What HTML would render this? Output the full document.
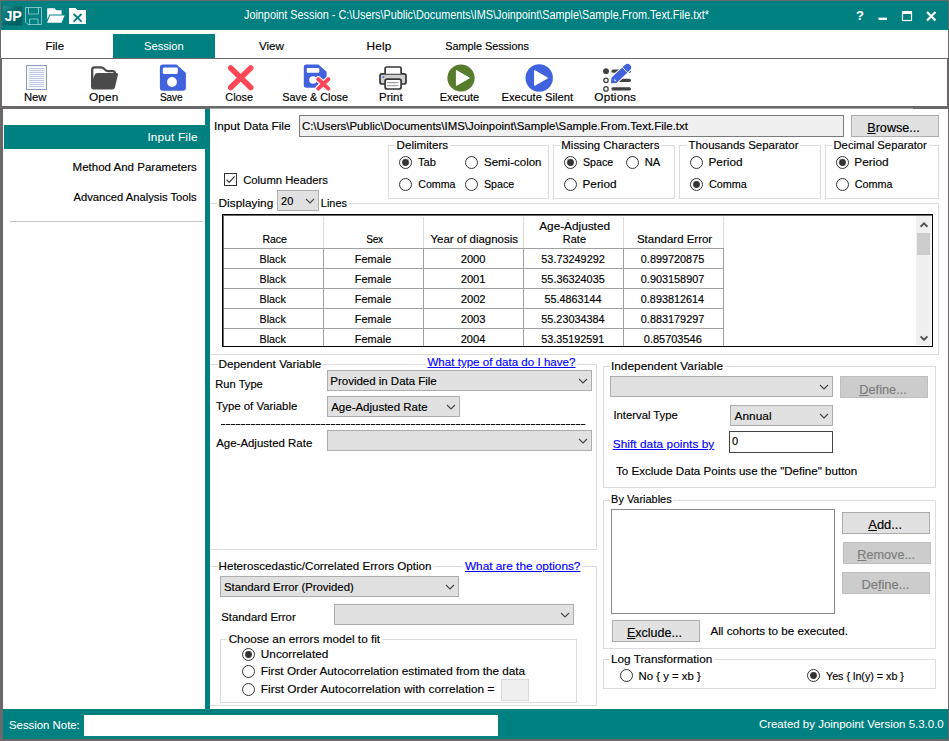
<!DOCTYPE html>
<html><head><meta charset="utf-8"><title>Joinpoint Session</title>
<style>
html,body{margin:0;padding:0;}
body{width:949px;height:741px;overflow:hidden;background:#6a6868;position:relative;font-family:"Liberation Sans",sans-serif;}
.a{position:absolute;display:block;}
.t{position:absolute;white-space:pre;color:#000;-webkit-text-stroke:0.16px currentColor;}
u{text-underline-offset:1px;}
</style></head><body>
<div class="a" style="left:1px;top:1px;width:947px;height:29px;background:#008080;"></div>
<div class="a" style="left:1px;top:30px;width:947px;height:28px;background:#fff;"></div>
<div class="a" style="left:113px;top:34px;width:102px;height:24px;background:#008080;"></div>
<div class="a" style="left:2px;top:59px;width:945px;height:47px;background:#fff;"></div>
<div class="a" style="left:3px;top:109px;width:202px;height:600px;background:#fff;"></div>
<div class="a" style="left:205px;top:109px;width:5px;height:600px;background:#008080;"></div>
<div class="a" style="left:210px;top:109px;width:738px;height:600px;background:#fff;"></div>
<div class="a" style="left:210px;top:108px;width:703px;height:1px;background:#a4a2a2;"></div>
<div class="a" style="left:3px;top:709px;width:945px;height:30px;background:#008080;"></div>
<div class="a" style="left:4px;top:125px;width:201px;height:24px;background:#008080;"></div>
<div class="a" style="left:10px;top:221px;width:193px;height:1px;background:#c4c4c4;"></div>
<div class="a" style="left:299px;top:115px;width:545px;height:22px;background:#f0f0f0;border:1px solid #7a7a7a;box-sizing:border-box;"></div>
<div class="a" style="left:851px;top:115px;width:88px;height:22px;background:#e1e1e1;border:1px solid #adadad;box-sizing:border-box;"></div>
<div class="a" style="left:210px;top:203px;width:729px;height:152px;border:1px solid #dcdcdc;box-sizing:border-box;border-left:none;"></div>
<div class="a" style="left:217px;top:196px;width:132px;height:14px;background:#fff;"></div>
<div class="a" style="left:277px;top:190px;width:42px;height:21px;background:#e1e1e1;border:1px solid #adadad;box-sizing:border-box;"></div>
<svg class="a" style="left:303.7px;top:197.0px" width="12" height="8" viewBox="0 0 12 8"><path d="M2 2 L6 6 L10 2" fill="none" stroke="#444" stroke-width="1.1"/></svg>
<div class="a" style="left:388px;top:145px;width:161px;height:54px;border:1px solid #dcdcdc;box-sizing:border-box;"></div>
<div class="a" style="left:395.5px;top:139px;width:54.25px;height:12px;background:#fff;"></div>
<svg class="a" style="left:399px;top:155.5px" width="13" height="13" viewBox="0 0 13 13"><circle cx="6.5" cy="6.5" r="6" fill="#fff" stroke="#333" stroke-width="1"/><circle cx="6.5" cy="6.5" r="3.4" fill="#333"/></svg>
<svg class="a" style="left:399px;top:177.5px" width="13" height="13" viewBox="0 0 13 13"><circle cx="6.5" cy="6.5" r="6" fill="#fff" stroke="#333" stroke-width="1"/></svg>
<svg class="a" style="left:465px;top:155.5px" width="13" height="13" viewBox="0 0 13 13"><circle cx="6.5" cy="6.5" r="6" fill="#fff" stroke="#333" stroke-width="1"/></svg>
<svg class="a" style="left:465px;top:177.5px" width="13" height="13" viewBox="0 0 13 13"><circle cx="6.5" cy="6.5" r="6" fill="#fff" stroke="#333" stroke-width="1"/></svg>
<div class="a" style="left:553px;top:145px;width:122px;height:54px;border:1px solid #dcdcdc;box-sizing:border-box;"></div>
<div class="a" style="left:560.25px;top:139px;width:100.75px;height:12px;background:#fff;"></div>
<svg class="a" style="left:564.25px;top:155.5px" width="13" height="13" viewBox="0 0 13 13"><circle cx="6.5" cy="6.5" r="6" fill="#fff" stroke="#333" stroke-width="1"/><circle cx="6.5" cy="6.5" r="3.4" fill="#333"/></svg>
<svg class="a" style="left:564.25px;top:177.5px" width="13" height="13" viewBox="0 0 13 13"><circle cx="6.5" cy="6.5" r="6" fill="#fff" stroke="#333" stroke-width="1"/></svg>
<svg class="a" style="left:626px;top:155.5px" width="13" height="13" viewBox="0 0 13 13"><circle cx="6.5" cy="6.5" r="6" fill="#fff" stroke="#333" stroke-width="1"/></svg>
<div class="a" style="left:679px;top:145px;width:142px;height:54px;border:1px solid #dcdcdc;box-sizing:border-box;"></div>
<div class="a" style="left:686.75px;top:139px;width:113.5px;height:12px;background:#fff;"></div>
<svg class="a" style="left:690px;top:155.5px" width="13" height="13" viewBox="0 0 13 13"><circle cx="6.5" cy="6.5" r="6" fill="#fff" stroke="#333" stroke-width="1"/></svg>
<svg class="a" style="left:690px;top:177.5px" width="13" height="13" viewBox="0 0 13 13"><circle cx="6.5" cy="6.5" r="6" fill="#fff" stroke="#333" stroke-width="1"/><circle cx="6.5" cy="6.5" r="3.4" fill="#333"/></svg>
<div class="a" style="left:825px;top:145px;width:114px;height:54px;border:1px solid #dcdcdc;box-sizing:border-box;"></div>
<div class="a" style="left:832.4px;top:139px;width:96.30000000000007px;height:12px;background:#fff;"></div>
<svg class="a" style="left:835.6px;top:155.5px" width="13" height="13" viewBox="0 0 13 13"><circle cx="6.5" cy="6.5" r="6" fill="#fff" stroke="#333" stroke-width="1"/><circle cx="6.5" cy="6.5" r="3.4" fill="#333"/></svg>
<svg class="a" style="left:835.6px;top:177.5px" width="13" height="13" viewBox="0 0 13 13"><circle cx="6.5" cy="6.5" r="6" fill="#fff" stroke="#333" stroke-width="1"/></svg>
<svg class="a" style="left:224px;top:173px" width="13" height="13" viewBox="0 0 13 13"><rect x="0.5" y="0.5" width="12" height="12" fill="#fff" stroke="#333"/><path d="M2.6 6.6 L5.2 9.3 L10.6 3.4" fill="none" stroke="#333" stroke-width="1.2"/></svg>
<div class="a" style="left:222px;top:214px;width:711px;height:133px;background:#fff;"></div>
<div class="a" style="left:222px;top:214px;width:711px;height:133px;box-sizing:border-box;border:1px solid #000"></div>
<div class="a" style="left:223px;top:215px;width:709px;height:1px;background:#6c6c6c;"></div>
<div class="a" style="left:223px;top:215px;width:1px;height:131px;background:#6c6c6c;"></div>
<div class="a" style="left:323px;top:217px;width:1px;height:31px;background:#dedede;"></div>
<div class="a" style="left:323px;top:248px;width:1px;height:98px;background:#a0a0a0;"></div>
<div class="a" style="left:423px;top:217px;width:1px;height:31px;background:#dedede;"></div>
<div class="a" style="left:423px;top:248px;width:1px;height:98px;background:#a0a0a0;"></div>
<div class="a" style="left:523px;top:217px;width:1px;height:31px;background:#dedede;"></div>
<div class="a" style="left:523px;top:248px;width:1px;height:98px;background:#a0a0a0;"></div>
<div class="a" style="left:623px;top:217px;width:1px;height:31px;background:#dedede;"></div>
<div class="a" style="left:623px;top:248px;width:1px;height:98px;background:#a0a0a0;"></div>
<div class="a" style="left:723px;top:217px;width:1px;height:31px;background:#dedede;"></div>
<div class="a" style="left:723px;top:248px;width:1px;height:98px;background:#a0a0a0;"></div>
<div class="a" style="left:224px;top:248px;width:500px;height:1px;background:#a0a0a0;"></div>
<div class="a" style="left:224px;top:268px;width:500px;height:1px;background:#a0a0a0;"></div>
<div class="a" style="left:224px;top:288px;width:500px;height:1px;background:#a0a0a0;"></div>
<div class="a" style="left:224px;top:308px;width:500px;height:1px;background:#a0a0a0;"></div>
<div class="a" style="left:224px;top:328px;width:500px;height:1px;background:#a0a0a0;"></div>
<div class="a" style="left:916px;top:216px;width:15px;height:129px;background:#f0f0f0;"></div>
<div class="a" style="left:917px;top:232.5px;width:13px;height:22.5px;background:#cdcdcd;"></div>
<svg class="a" style="left:918.5px;top:220.6px" width="10" height="8" viewBox="0 0 10 8"><path d="M1.6 5.8 L5 2.4 L8.4 5.8" fill="none" stroke="#555" stroke-width="2"/></svg>
<svg class="a" style="left:918.5px;top:333.6px" width="10" height="8" viewBox="0 0 10 8"><path d="M1.6 2.4 L5 5.8 L8.4 2.4" fill="none" stroke="#555" stroke-width="2"/></svg>
<div class="a" style="left:210px;top:364px;width:387px;height:186px;border:1px solid #dcdcdc;box-sizing:border-box;border-left:none;"></div>
<div class="a" style="left:217.5px;top:358px;width:105.25px;height:12px;background:#fff;"></div>
<div class="a" style="left:425.5px;top:358px;width:151.5px;height:12px;background:#fff;"></div>
<div class="a" style="left:327px;top:370px;width:265px;height:21px;background:#e1e1e1;border:1px solid #adadad;box-sizing:border-box;"></div>
<svg class="a" style="left:576.7px;top:377.0px" width="12" height="8" viewBox="0 0 12 8"><path d="M2 2 L6 6 L10 2" fill="none" stroke="#444" stroke-width="1.1"/></svg>
<div class="a" style="left:327px;top:396px;width:133px;height:21px;background:#e1e1e1;border:1px solid #adadad;box-sizing:border-box;"></div>
<svg class="a" style="left:444.7px;top:403.0px" width="12" height="8" viewBox="0 0 12 8"><path d="M2 2 L6 6 L10 2" fill="none" stroke="#444" stroke-width="1.1"/></svg>
<div class="a" style="left:221px;top:424px;width:364.5px;height:1px;background:repeating-linear-gradient(90deg,#111 0,#111 4px,#9aa 4px,#9aa 5px)"></div>
<div class="a" style="left:327px;top:430px;width:265px;height:21px;background:#e1e1e1;border:1px solid #adadad;box-sizing:border-box;"></div>
<svg class="a" style="left:576.7px;top:437.0px" width="12" height="8" viewBox="0 0 12 8"><path d="M2 2 L6 6 L10 2" fill="none" stroke="#444" stroke-width="1.1"/></svg>
<div class="a" style="left:210px;top:566px;width:387px;height:140px;border:1px solid #dcdcdc;box-sizing:border-box;border-left:none;"></div>
<div class="a" style="left:217.5px;top:560px;width:215.25px;height:12px;background:#fff;"></div>
<div class="a" style="left:463px;top:560px;width:119px;height:12px;background:#fff;"></div>
<div class="a" style="left:220px;top:576px;width:239px;height:21px;background:#e1e1e1;border:1px solid #adadad;box-sizing:border-box;"></div>
<svg class="a" style="left:443.7px;top:583.0px" width="12" height="8" viewBox="0 0 12 8"><path d="M2 2 L6 6 L10 2" fill="none" stroke="#444" stroke-width="1.1"/></svg>
<div class="a" style="left:334px;top:604px;width:240px;height:21px;background:#e1e1e1;border:1px solid #adadad;box-sizing:border-box;"></div>
<svg class="a" style="left:558.7px;top:611.0px" width="12" height="8" viewBox="0 0 12 8"><path d="M2 2 L6 6 L10 2" fill="none" stroke="#444" stroke-width="1.1"/></svg>
<div class="a" style="left:220px;top:639px;width:357px;height:64px;border:1px solid #dcdcdc;box-sizing:border-box;"></div>
<div class="a" style="left:227.25px;top:633px;width:154.75px;height:12px;background:#fff;"></div>
<svg class="a" style="left:242px;top:648px" width="13" height="13" viewBox="0 0 13 13"><circle cx="6.5" cy="6.5" r="6" fill="#fff" stroke="#333" stroke-width="1"/><circle cx="6.5" cy="6.5" r="3.4" fill="#333"/></svg>
<svg class="a" style="left:242px;top:664.5px" width="13" height="13" viewBox="0 0 13 13"><circle cx="6.5" cy="6.5" r="6" fill="#fff" stroke="#333" stroke-width="1"/></svg>
<svg class="a" style="left:242px;top:682.5px" width="13" height="13" viewBox="0 0 13 13"><circle cx="6.5" cy="6.5" r="6" fill="#fff" stroke="#333" stroke-width="1"/></svg>
<div class="a" style="left:501px;top:679px;width:28px;height:22px;background:#f0f0f0;border:1px solid #d9d9d9;box-sizing:border-box;"></div>
<div class="a" style="left:603px;top:366px;width:333px;height:122px;border:1px solid #dcdcdc;box-sizing:border-box;"></div>
<div class="a" style="left:610px;top:360px;width:114.5px;height:12px;background:#fff;"></div>
<div class="a" style="left:610px;top:376px;width:223px;height:21px;background:#e1e1e1;border:1px solid #adadad;box-sizing:border-box;"></div>
<svg class="a" style="left:817.7px;top:383.0px" width="12" height="8" viewBox="0 0 12 8"><path d="M2 2 L6 6 L10 2" fill="none" stroke="#444" stroke-width="1.1"/></svg>
<div class="a" style="left:840px;top:376px;width:88px;height:22px;background:#cccccc;border:1px solid #bfbfbf;box-sizing:border-box;"></div>
<div class="a" style="left:730px;top:405px;width:103px;height:21px;background:#e1e1e1;border:1px solid #adadad;box-sizing:border-box;"></div>
<svg class="a" style="left:817.7px;top:412.0px" width="12" height="8" viewBox="0 0 12 8"><path d="M2 2 L6 6 L10 2" fill="none" stroke="#444" stroke-width="1.1"/></svg>
<div class="a" style="left:729px;top:431px;width:104px;height:22px;background:#fff;border:1px solid #444;box-sizing:border-box;"></div>
<div class="a" style="left:603px;top:500px;width:333px;height:149px;border:1px solid #dcdcdc;box-sizing:border-box;"></div>
<div class="a" style="left:610px;top:494px;width:63.25px;height:12px;background:#fff;"></div>
<div class="a" style="left:611px;top:509px;width:224px;height:105px;background:#fff;border:1px solid #828790;box-sizing:border-box;"></div>
<div class="a" style="left:842px;top:512px;width:88px;height:22px;background:#e1e1e1;border:1px solid #adadad;box-sizing:border-box;"></div>
<div class="a" style="left:843px;top:542px;width:88px;height:22px;background:#cccccc;border:1px solid #bfbfbf;box-sizing:border-box;"></div>
<div class="a" style="left:842px;top:572px;width:88px;height:22px;background:#cccccc;border:1px solid #bfbfbf;box-sizing:border-box;"></div>
<div class="a" style="left:612px;top:620px;width:88px;height:22px;background:#e1e1e1;border:1px solid #adadad;box-sizing:border-box;"></div>
<div class="a" style="left:603px;top:659px;width:333px;height:30px;border:1px solid #dcdcdc;box-sizing:border-box;"></div>
<div class="a" style="left:610px;top:653px;width:103.75px;height:12px;background:#fff;"></div>
<svg class="a" style="left:620px;top:669.25px" width="13" height="13" viewBox="0 0 13 13"><circle cx="6.5" cy="6.5" r="6" fill="#fff" stroke="#333" stroke-width="1"/></svg>
<svg class="a" style="left:807px;top:669.25px" width="13" height="13" viewBox="0 0 13 13"><circle cx="6.5" cy="6.5" r="6" fill="#fff" stroke="#333" stroke-width="1"/><circle cx="6.5" cy="6.5" r="3.4" fill="#333"/></svg>
<div class="a" style="left:84px;top:715px;width:413.5px;height:20.5px;background:#fff;"></div>
<svg class="a" style="left:850px;top:5px" width="95" height="22" viewBox="850 5 95 22"><g fill="none" stroke="#fff"><path d="M878.5 18.8 H887" stroke-width="2.4"/><rect x="902.5" y="12.5" width="9" height="8" stroke-width="1.2"/><path d="M902 12.5 H912" stroke-width="3"/><path d="M927 12 L935.5 20.5 M935.5 12 L927 20.5" stroke-width="2.2"/></g></svg>
<svg class="a" style="left:0;top:0" width="949" height="110" viewBox="0 0 949 110"><defs><linearGradient id="jp" x1="0" y1="0" x2="1" y2="1"><stop offset="0" stop-color="#2a8f8f"/><stop offset="0.45" stop-color="#006a6a"/><stop offset="1" stop-color="#005c5c"/></linearGradient></defs><rect x="3" y="6" width="19.5" height="19.5" fill="url(#jp)"/><g fill="none" stroke="#fff" stroke-opacity="0.5" stroke-width="1"><path d="M25.5 7.5 H41.5 V24.5 H28 L25.5 22 Z"/><path d="M28.5 7.5 V14 H38.5 V7.5"/><path d="M29.5 24.5 V19 H38 V24.5"/></g><g fill="#fff"><path d="M47.2 8.2 H54.6 L56.4 10.2 H61.6 V14.5 H49.4 L47.2 19.8 Z"/><path d="M50 15.4 H64.6 L61.5 22.7 H47 Z"/></g><path d="M69 8 H75.6 L77.4 10 H86 V24 H69 Z" fill="#fff"/><path d="M73.6 14 L81.6 21.6 M81.6 14 L73.6 21.6" stroke="#008080" stroke-width="1.8" fill="none"/><rect x="26.5" y="65.5" width="20" height="24" fill="#f6f8fd" stroke="#8a9bc2" stroke-width="1"/><g stroke="#c2cce3" stroke-width="1"><path d="M29 68.5 H44"/><path d="M29 70.5 H44"/><path d="M29 72.5 H44"/><path d="M29 74.5 H44"/><path d="M29 76.5 H44"/><path d="M29 78.5 H44"/><path d="M29 80.5 H44"/><path d="M29 82.5 H44"/><path d="M29 84.5 H44"/><path d="M29 86.5 H44"/></g><path d="M92.2 87 V69.7 a2.4 2.4 0 0 1 2.4 -2.4 h6.4 c1.7 0 2.5 0.9 3.5 1.9 s1.9 1.9 3.6 1.9 h4.5 a2.4 2.4 0 0 1 2.4 2.4 V74" fill="none" stroke="#4a4a4a" stroke-width="2.3"/><path d="M97.3 73.1 H116.3 a1.6 1.6 0 0 1 1.55 2.1 L114.9 87.6 a2.8 2.8 0 0 1 -2.7 2 H93.5 a2.4 2.4 0 0 1 -2.4 -2.4 V83.5 L94.6 75.1 a2.8 2.8 0 0 1 2.7 -2 Z" fill="#4a4a4a"/><path d="M162.9 64.6 H176.54000000000002 L185.9 73.024 V87.7 a3 3 0 0 1 -3 3 H162.9 a3 3 0 0 1 -3 -3 V67.6 a3 3 0 0 1 3 -3 Z" fill="#4062dd"/><rect x="162.8" y="67.5" width="15" height="6.4" rx="1.3" fill="#fff"/><circle cx="172" cy="82" r="4.9" fill="#fff"/><path d="M230.7 68 L250.7 87.6 M250.7 68 L230.7 87.6" stroke="#ff4757" stroke-width="5.6" stroke-linecap="round" fill="none"/><path d="M306.40000000000003 64.4 H318.392 L326.6 71.78720000000001 V85.10000000000001 a2.6 2.6 0 0 1 -2.6 2.6 H306.40000000000003 a2.6 2.6 0 0 1 -2.6 -2.6 V67.0 a2.6 2.6 0 0 1 2.6 -2.6 Z" fill="#4062dd"/><rect x="306.7" y="68.1" width="12.6" height="4.6" rx="1" fill="#fff"/><circle cx="313" cy="80" r="3.8" fill="#fff"/><path d="M318.3 79.2 L328.3 88.6 M328.3 79.2 L318.3 88.6" stroke="#fff" stroke-width="6.2" stroke-linecap="round" fill="none"/><path d="M318.3 79.2 L328.3 88.6 M328.3 79.2 L318.3 88.6" stroke="#ff4757" stroke-width="4" stroke-linecap="round" fill="none"/><g stroke="#363636" stroke-width="1.7" stroke-linejoin="round"><rect x="380" y="73.8" width="26" height="10.2" rx="2" fill="#cfcfcf"/><path d="M385.1 73.8 V68.5 a1.5 1.5 0 0 1 1.5 -1.5 h13 a1.5 1.5 0 0 1 1.5 1.5 V73.8" fill="#fff"/><rect x="385.1" y="79.1" width="16" height="9.9" rx="2" fill="#fff"/></g><path d="M387.2 82.7 H398.4 M387.2 85.7 H398.4" stroke="#8c8c8c" stroke-width="1"/><circle cx="383.4" cy="77.1" r="1" fill="#3f66e8"/><circle cx="461" cy="78" r="13.6" fill="#567c2c"/><path d="M456.4 70.6 L469.4 78 L456.4 85.4 Z" fill="#fff" stroke="#fff" stroke-width="1" stroke-linejoin="round"/><circle cx="539.2" cy="78" r="13.7" fill="#4062dd"/><path d="M534.6 70.6 L547.6 78 L534.6 85.4 Z" fill="#fff" stroke="#fff" stroke-width="1" stroke-linejoin="round"/><g stroke="#424242" stroke-width="3.3" stroke-linecap="round"><path d="M613 71.2 H629.4 M613 80.3 H629.4 M613 88.9 H629.4"/></g><circle cx="606" cy="71.2" r="2.9" fill="#424242"/><circle cx="606" cy="80.3" r="2.2" fill="#fff" stroke="#424242" stroke-width="1.3"/><circle cx="606" cy="88.9" r="2.2" fill="#fff" stroke="#424242" stroke-width="1.3"/><path d="M611 83.3 L611.4 77.8 L624.95 64.95 A3.6 3.6 0 0 1 630.05 70.05 L616.5 82.9 Z" fill="#fff" stroke="#fff" stroke-width="2" stroke-linejoin="round"/><path d="M611 83.3 L611.4 77.8 L624.95 64.95 A3.6 3.6 0 0 1 630.05 70.05 L616.5 82.9 Z" fill="#4062dd"/><path d="M622.3 67.3 L627.7 72.5" stroke="#fff" stroke-width="0.9"/><path d="M614.2 78.6 L614.2 81.2 L616.4 81 Z" fill="#fff" fill-opacity="0.8"/></svg>
<span class="t" style="left:243.56px;top:8px;font-size:12px;line-height:14px;color:#fff;-webkit-text-stroke:0;transform:scaleX(0.9017);transform-origin:0.19px 0;">Joinpoint Session - C:\Users\Public\Documents\IMS\Joinpoint\Sample\Sample.From.Text.File.txt*</span>
<span class="t" style="left:45.56px;top:40px;font-size:11.45px;line-height:12px;letter-spacing:0.006px;">File</span>
<span class="t" style="left:143.99px;top:40px;font-size:11.17px;line-height:12px;letter-spacing:0.007px;color:#fff;-webkit-text-stroke:0.06px #fff;">Session</span>
<span class="t" style="left:258.95px;top:39px;font-size:11.64px;line-height:13px;letter-spacing:0.012px;">View</span>
<span class="t" style="left:366.53px;top:39px;font-size:11.8px;line-height:14px;letter-spacing:0.151px;">Help</span>
<span class="t" style="left:445.26px;top:40px;font-size:10.82px;line-height:12px;letter-spacing:0.007px;">Sample Sessions</span>
<span class="t" style="left:23.98px;top:91px;font-size:11.24px;line-height:12px;letter-spacing:0.010px;">New</span>
<span class="t" style="left:88.94px;top:90px;font-size:11.8px;line-height:14px;letter-spacing:0.156px;">Open</span>
<span class="t" style="left:159.95px;top:92px;font-size:10.0px;line-height:11px;letter-spacing:-0.032px;">Save</span>
<span class="t" style="left:225.35px;top:91px;font-size:10.85px;line-height:12px;letter-spacing:0.002px;">Close</span>
<span class="t" style="left:282.21px;top:91px;font-size:10.86px;line-height:12px;letter-spacing:-0.002px;">Save &amp; Close</span>
<span class="t" style="left:379.06px;top:91px;font-size:11.49px;line-height:12px;letter-spacing:0.003px;">Print</span>
<span class="t" style="left:439.70px;top:91px;font-size:10.93px;line-height:12px;letter-spacing:0.003px;">Execute</span>
<span class="t" style="left:501.48px;top:91px;font-size:11.2px;line-height:12px;letter-spacing:0.006px;">Execute Silent</span>
<span class="t" style="left:594.34px;top:90px;font-size:11.8px;line-height:14px;letter-spacing:0.172px;">Options</span>
<span class="t" style="left:147.41px;top:130px;font-size:11.8px;line-height:14px;letter-spacing:0.177px;color:#fff;-webkit-text-stroke:0.06px #fff;">Input File</span>
<span class="t" style="left:72.56px;top:161px;font-size:11.52px;line-height:12px;letter-spacing:0.002px;">Method And Parameters</span>
<span class="t" style="left:73.48px;top:191px;font-size:11.2px;line-height:12px;letter-spacing:0.008px;">Advanced Analysis Tools</span>
<span class="t" style="left:213.91px;top:119px;font-size:11.78px;line-height:13px;letter-spacing:0.007px;">Input Data File</span>
<span class="t" style="left:301.92px;top:120px;font-size:11.4px;line-height:12px;letter-spacing:0.006px;">C:\Users\Public\Documents\IMS\Joinpoint\Sample\Sample.From.Text.File.txt</span>
<span class="t" style="left:867.26px;top:121px;font-size:12.62px;line-height:14px;letter-spacing:0.004px;"><u>B</u>rowse...</span>
<span class="t" style="left:218.53px;top:196px;font-size:11.8px;line-height:14px;letter-spacing:0.034px;">Displaying</span>
<span class="t" style="left:281.05px;top:195px;font-size:10.95px;line-height:12px;letter-spacing:0.013px;">20</span>
<span class="t" style="left:320.86px;top:197px;font-size:10.89px;line-height:12px;letter-spacing:0.010px;">Lines</span>
<span class="t" style="left:396.55px;top:138px;font-size:11.61px;line-height:13px;letter-spacing:0.002px;">Delimiters</span>
<span class="t" style="left:418.00px;top:156px;font-size:11.14px;line-height:12px;letter-spacing:0.016px;">Tab</span>
<span class="t" style="left:418.21px;top:178px;font-size:10.65px;line-height:12px;letter-spacing:0.011px;">Comma</span>
<span class="t" style="left:483.98px;top:156px;font-size:11.5px;line-height:12px;">Semi-colon</span>
<span class="t" style="left:484.02px;top:178px;font-size:10.65px;line-height:12px;letter-spacing:0.009px;">Space</span>
<span class="t" style="left:561.31px;top:139px;font-size:11.46px;line-height:12px;letter-spacing:0.005px;">Missing Characters</span>
<span class="t" style="left:583.02px;top:156px;font-size:10.65px;line-height:12px;letter-spacing:0.009px;">Space</span>
<span class="t" style="left:582.54px;top:177px;font-size:11.75px;line-height:13px;letter-spacing:0.001px;">Period</span>
<span class="t" style="left:644.84px;top:156px;font-size:11.11px;line-height:12px;">NA</span>
<span class="t" style="left:688.49px;top:139px;font-size:11.43px;line-height:12px;letter-spacing:0.006px;">Thousands Separator</span>
<span class="t" style="left:708.54px;top:155px;font-size:11.75px;line-height:13px;letter-spacing:0.001px;">Period</span>
<span class="t" style="left:708.95px;top:178px;font-size:10.8px;line-height:12px;letter-spacing:0.001px;">Comma</span>
<span class="t" style="left:833.47px;top:139px;font-size:11.28px;line-height:12px;letter-spacing:0.007px;">Decimal Separator</span>
<span class="t" style="left:854.23px;top:155px;font-size:11.8px;line-height:14px;letter-spacing:0.046px;">Period</span>
<span class="t" style="left:854.65px;top:178px;font-size:10.81px;line-height:12px;letter-spacing:0.014px;">Comma</span>
<span class="t" style="left:243.18px;top:174px;font-size:11.29px;line-height:12px;letter-spacing:0.006px;">Column Headers</span>
<span class="t" style="left:262.39px;top:233px;font-size:10.53px;line-height:12px;letter-spacing:0.011px;">Race</span>
<span class="t" style="left:366.30px;top:234px;font-size:10.0px;line-height:11px;letter-spacing:-0.210px;">Sex</span>
<span class="t" style="left:430.50px;top:233px;font-size:11.45px;line-height:12px;letter-spacing:0.006px;">Year of diagnosis</span>
<span class="t" style="left:562.85px;top:233px;font-size:10.95px;line-height:12px;letter-spacing:0.010px;">Rate</span>
<span class="t" style="left:636.98px;top:233px;font-size:11.47px;line-height:12px;letter-spacing:-0.001px;">Standard Error</span>
<span class="t" style="left:539.23px;top:219px;font-size:11.79px;line-height:13px;letter-spacing:0.004px;">Age-Adjusted</span>
<span class="t" style="left:259.62px;top:253px;font-size:10.68px;line-height:12px;letter-spacing:0.004px;">Black</span>
<span class="t" style="left:354.86px;top:253px;font-size:10.91px;line-height:12px;letter-spacing:0.003px;">Female</span>
<span class="t" style="left:460.69px;top:253px;font-size:11.12px;line-height:12px;letter-spacing:0.010px;">2000</span>
<span class="t" style="left:541.31px;top:253px;font-size:10.87px;line-height:12px;letter-spacing:0.007px;">53.73249292</span>
<span class="t" style="left:640.83px;top:253px;font-size:10.85px;line-height:12px;letter-spacing:0.006px;">0.899720875</span>
<span class="t" style="left:259.62px;top:273px;font-size:10.68px;line-height:12px;letter-spacing:0.004px;">Black</span>
<span class="t" style="left:354.86px;top:273px;font-size:10.91px;line-height:12px;letter-spacing:0.003px;">Female</span>
<span class="t" style="left:460.69px;top:273px;font-size:11.17px;line-height:12px;letter-spacing:0.013px;">2001</span>
<span class="t" style="left:541.32px;top:273px;font-size:10.86px;line-height:12px;letter-spacing:-0.002px;">55.36324035</span>
<span class="t" style="left:640.83px;top:273px;font-size:10.87px;line-height:12px;letter-spacing:0.006px;">0.903158907</span>
<span class="t" style="left:259.62px;top:293px;font-size:10.68px;line-height:12px;letter-spacing:0.004px;">Black</span>
<span class="t" style="left:354.86px;top:293px;font-size:10.91px;line-height:12px;letter-spacing:0.003px;">Female</span>
<span class="t" style="left:460.69px;top:293px;font-size:11.18px;line-height:12px;letter-spacing:0.007px;">2002</span>
<span class="t" style="left:544.57px;top:293px;font-size:10.79px;line-height:12px;letter-spacing:0.004px;">55.4863144</span>
<span class="t" style="left:640.83px;top:293px;font-size:10.83px;line-height:12px;letter-spacing:0.001px;">0.893812614</span>
<span class="t" style="left:259.62px;top:313px;font-size:10.68px;line-height:12px;letter-spacing:0.004px;">Black</span>
<span class="t" style="left:354.86px;top:313px;font-size:10.91px;line-height:12px;letter-spacing:0.003px;">Female</span>
<span class="t" style="left:460.69px;top:313px;font-size:11.15px;line-height:12px;letter-spacing:0.006px;">2003</span>
<span class="t" style="left:541.32px;top:313px;font-size:10.83px;line-height:12px;letter-spacing:0.002px;">55.23034384</span>
<span class="t" style="left:640.83px;top:313px;font-size:10.87px;line-height:12px;letter-spacing:0.006px;">0.883179297</span>
<span class="t" style="left:259.62px;top:333px;font-size:10.68px;line-height:12px;letter-spacing:0.004px;">Black</span>
<span class="t" style="left:354.86px;top:333px;font-size:10.91px;line-height:12px;letter-spacing:0.003px;">Female</span>
<span class="t" style="left:460.69px;top:333px;font-size:11.07px;line-height:12px;letter-spacing:0.007px;">2004</span>
<span class="t" style="left:541.32px;top:333px;font-size:10.78px;line-height:12px;letter-spacing:0.009px;">53.35192591</span>
<span class="t" style="left:643.82px;top:333px;font-size:10.96px;line-height:12px;letter-spacing:0.005px;">0.85703546</span>
<span class="t" style="left:218.54px;top:357px;font-size:11.72px;line-height:13px;letter-spacing:0.001px;">Dependent Variable</span>
<span class="t" style="left:427.45px;top:356px;font-size:11.57px;line-height:12px;letter-spacing:0.005px;color:#0000ff;text-decoration:underline;">What type of data do I have?</span>
<span class="t" style="left:215.34px;top:378px;font-size:11.13px;line-height:12px;letter-spacing:0.006px;">Run Type</span>
<span class="t" style="left:330.31px;top:375px;font-size:11.47px;line-height:12px;">Provided in Data File</span>
<span class="t" style="left:215.99px;top:400px;font-size:11.36px;line-height:12px;letter-spacing:0.001px;">Type of Variable</span>
<span class="t" style="left:331.23px;top:401px;font-size:11.47px;line-height:12px;letter-spacing:0.001px;">Age-Adjusted Rate</span>
<span class="t" style="left:216.23px;top:437px;font-size:11.44px;line-height:12px;letter-spacing:0.001px;">Age-Adjusted Rate</span>
<span class="t" style="left:218.55px;top:559px;font-size:11.61px;line-height:13px;letter-spacing:0.001px;">Heteroscedastic/Correlated Errors Option</span>
<span class="t" style="left:464.95px;top:559px;font-size:11.8px;line-height:14px;letter-spacing:0.004px;color:#0000ff;text-decoration:underline;">What are the options?</span>
<span class="t" style="left:223.99px;top:581px;font-size:11.33px;line-height:12px;letter-spacing:0.001px;">Standard Error (Provided)</span>
<span class="t" style="left:221.23px;top:611px;font-size:11.35px;line-height:12px;letter-spacing:0.004px;">Standard Error</span>
<span class="t" style="left:228.65px;top:632px;font-size:11.74px;line-height:13px;letter-spacing:0.004px;">Choose an errors model to fit</span>
<span class="t" style="left:260.84px;top:647px;font-size:11.78px;line-height:13px;letter-spacing:0.005px;">Uncorrelated</span>
<span class="t" style="left:260.79px;top:664px;font-size:11.74px;line-height:13px;letter-spacing:0.004px;">First Order Autocorrelation estimated from the data</span>
<span class="t" style="left:260.78px;top:682px;font-size:11.8px;line-height:14px;letter-spacing:0.056px;">First Order Autocorrelation with correlation =</span>
<span class="t" style="left:610.91px;top:359px;font-size:11.8px;line-height:14px;letter-spacing:0.043px;">Independent Variable</span>
<span class="t" style="left:859.20px;top:382px;font-size:12.81px;line-height:15px;letter-spacing:0.008px;color:#7c7c7c;"><u>D</u>efine...</span>
<span class="t" style="left:613.46px;top:409px;font-size:11.27px;line-height:12px;letter-spacing:0.004px;">Interval Type</span>
<span class="t" style="left:734.48px;top:409px;font-size:11.8px;line-height:14px;letter-spacing:0.066px;">Annual</span>
<span class="t" style="left:612.71px;top:437px;font-size:11.8px;line-height:14px;letter-spacing:0.064px;color:#0000ff;text-decoration:underline;">Shift data points by</span>
<span class="t" style="left:732.07px;top:435px;font-size:11px;line-height:12px;">0</span>
<span class="t" style="left:615.99px;top:465px;font-size:11.58px;line-height:12px;letter-spacing:0.001px;">To Exclude Data Points use the "Define" button</span>
<span class="t" style="left:611.10px;top:493px;font-size:10.93px;line-height:12px;letter-spacing:0.004px;">By Variables</span>
<span class="t" style="left:868.27px;top:517px;font-size:12.9px;line-height:15px;letter-spacing:0.005px;"><u>A</u>dd...</span>
<span class="t" style="left:857.36px;top:548px;font-size:12.64px;line-height:14px;letter-spacing:0.007px;color:#7c7c7c;"><u>R</u>emove...</span>
<span class="t" style="left:861.44px;top:577px;font-size:12.88px;line-height:15px;letter-spacing:0.004px;color:#7c7c7c;">De<u>f</u>ine...</span>
<span class="t" style="left:626.97px;top:626px;font-size:12.51px;line-height:14px;letter-spacing:0.003px;"><u>E</u>xclude...</span>
<span class="t" style="left:710.48px;top:624px;font-size:11.68px;line-height:13px;letter-spacing:0.002px;">All cohorts to be executed.</span>
<span class="t" style="left:611.04px;top:652px;font-size:11.75px;line-height:13px;letter-spacing:0.002px;">Log Transformation</span>
<span class="t" style="left:638.57px;top:670px;font-size:11.35px;line-height:12px;letter-spacing:0.002px;">No { y = xb }</span>
<span class="t" style="left:826.01px;top:670px;font-size:10.71px;line-height:12px;letter-spacing:0.005px;">Yes { ln(y) = xb }</span>
<span class="t" style="left:8.98px;top:719px;font-size:11.37px;line-height:12px;letter-spacing:0.007px;color:#fff;-webkit-text-stroke:0.06px #fff;">Session Note:</span>
<span class="t" style="left:758.92px;top:718px;font-size:11.46px;line-height:12px;letter-spacing:0.004px;color:#fff;-webkit-text-stroke:0.06px #fff;">Created by Joinpoint Version 5.3.0.0</span>
<span class="t" style="left:856.00px;top:8px;font-size:13px;line-height:15px;color:#fff;-webkit-text-stroke:0.06px #fff;font-weight:700;">?</span>
<span class="t" style="left:4.38px;top:8px;font-size:14.31px;line-height:16px;letter-spacing:0.019px;color:#fff;-webkit-text-stroke:0.06px #fff;font-weight:700;">JP</span>
</body></html>
